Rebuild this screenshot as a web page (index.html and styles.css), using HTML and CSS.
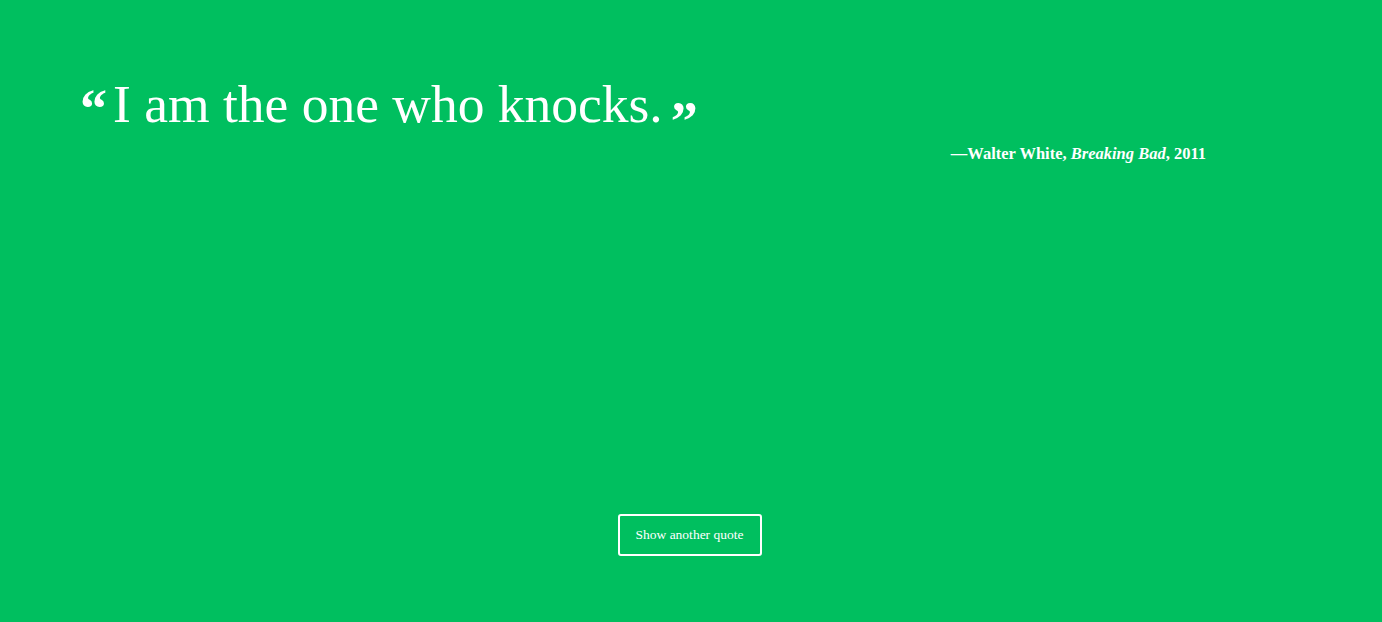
FILE: index.html
```html
<!DOCTYPE html>
<html>
<head>
<meta charset="utf-8">
<link rel="stylesheet" href="styles.css">
</head>
<body>
<div class="page">
  <div class="quote-box">
    <blockquote class="quote">
      <span class="mark open">&ldquo;</span><span class="text">I am the one who knocks.</span><span class="mark close">&rdquo;</span>
    </blockquote>
    <p class="cite">&mdash;Walter White, <em>Breaking Bad</em>, 2011</p>
  </div>
  <div class="actions">
    <button class="btn">Show another quote</button>
  </div>
</div>
</body>
</html>
```
FILE: styles.css
```css
html, body {
  margin: 0;
  padding: 0;
  background: #00bf5f;
}
.page {
  height: 622px;
  display: flex;
  flex-direction: column;
  justify-content: space-between;
  box-sizing: border-box;
  padding: 72px 0 66px;
  font-family: "Liberation Serif", "DejaVu Serif", serif;
  color: #fff;
}
.quote-box {
  padding: 0 176px 0 80px;
}
.quote {
  margin: 0;
  display: flex;
  align-items: flex-start;
  height: 64px;
  font-size: 53.5px;
  line-height: 64px;
}
.mark {
  font-weight: bold;
  font-size: 54px;
  line-height: 1;
}
.mark.open {
  margin-top: 10px;
  margin-right: 6px;
}
.mark.close {
  margin-top: 22px;
  margin-left: 8px;
}
.cite {
  margin: 8px 0 0;
  text-align: right;
  font-size: 16.5px;
  font-weight: bold;
}
.cite em {
  font-style: italic;
}
.actions {
  display: flex;
  justify-content: center;
}
.btn {
  background: transparent;
  border: 2px solid #fff;
  border-radius: 3px;
  color: #fff;
  font-family: "Liberation Serif", "DejaVu Serif", serif;
  font-size: 13.5px;
  width: 144px;
  height: 42px;
  padding: 0;
  margin-right: 3px;
  cursor: pointer;
}
```
